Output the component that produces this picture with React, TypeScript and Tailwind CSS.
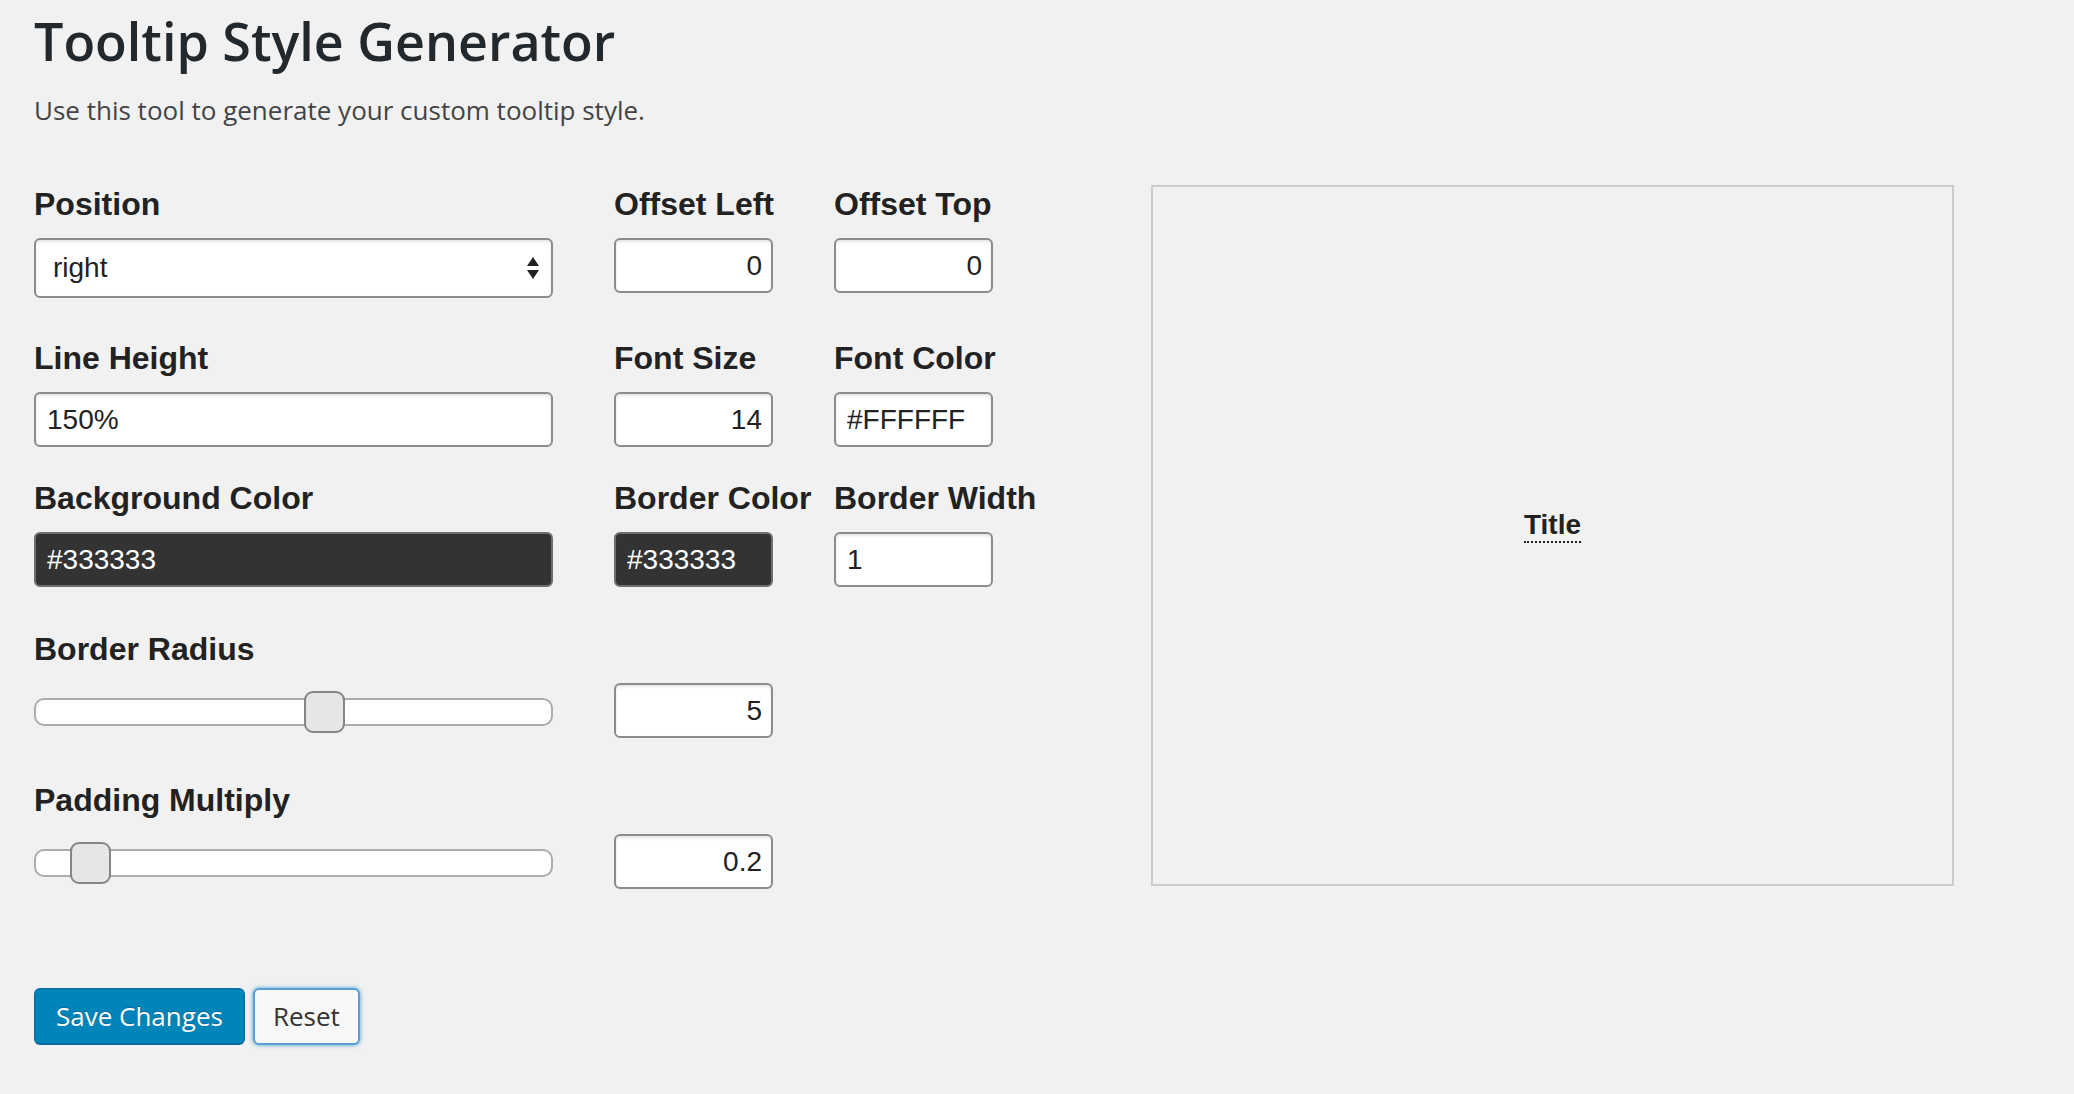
import { useState } from 'react';

const sans = "font-['Liberation_Sans',Arial,sans-serif]";
const open = "font-['Open_Sans',sans-serif]";

const labelCls = `block whitespace-nowrap text-[32px] leading-[32px] font-bold text-[#222] ${sans}`;
const inputCls = `block h-[55px] w-full rounded-[6px] border-2 border-[#8c8c8c] bg-white px-[11px] text-[28px] text-[#222] shadow-[inset_0_2px_3px_rgba(0,0,0,0.1)] outline-none ${sans}`;
const darkCls = `block h-[55px] w-full rounded-[6px] border-2 border-[#6e6e6e] bg-[#333333] px-[11px] text-[28px] text-white outline-none ${sans}`;

const Field = ({ label, children }: { label?: string; children: React.ReactNode }) => (
  <div>
    {label ? <span className={labelCls}>{label}</span> : <span className="block h-[32px]" />}
    <div className="mt-[18px]">{children}</div>
  </div>
);

const Slider = ({ offset }: { offset: number }) => (
  <div className="relative h-[28px] w-full rounded-[10px] border-2 border-[#acacac] bg-white">
    {/* thumb */}
    <div
      className="absolute top-[-9px] h-[42px] w-[41px] rounded-[9px] border-2 border-[#858585] bg-[#e6e6e6]"
      style={{ left: offset }}
    />
  </div>
);

export default function App() {
  const [position, setPosition] = useState('right');

  return (
    <div className={`min-h-screen bg-[#f1f1f1] pl-[34px] pt-[11px] ${open}`}>
      <h1 className="text-[52px] leading-[60px] font-semibold text-[#23282d]">Tooltip Style Generator</h1>
      <p className="mt-[21px] text-[26px] leading-[36px] text-[#444]">
        Use this tool to generate your custom tooltip style.
      </p>

      <div className="mt-[57px] flex items-start">
        {/* Form */}
        <div className="w-[960px] pt-[3px]">
          <div className="grid grid-cols-[519px_159px_159px] items-start gap-x-[61px]">
            <Field label="Position">
              <div className="relative">
                <select
                  value={position}
                  onChange={(e) => setPosition(e.target.value)}
                  className={`${inputCls} h-[60px] appearance-none pl-[17px]`}
                >
                  <option>top</option>
                  <option>right</option>
                  <option>bottom</option>
                  <option>left</option>
                </select>
                <svg className="pointer-events-none absolute right-[13px] top-[18px]" width="14" height="24" viewBox="0 0 14 24">
                  <path d="M7 1 L13 10 L1 10 Z" fill="#222" />
                  <path d="M1 14 L13 14 L7 23 Z" fill="#222" />
                </svg>
              </div>
            </Field>
            <Field label="Offset Left">
              <input className={`${inputCls} text-right pr-[9px]`} defaultValue="0" />
            </Field>
            <Field label="Offset Top">
              <input className={`${inputCls} text-right pr-[9px]`} defaultValue="0" />
            </Field>
          </div>

          <div className="mt-[44px] grid grid-cols-[519px_159px_159px] items-start gap-x-[61px]">
            <Field label="Line Height">
              <input className={inputCls} defaultValue="150%" />
            </Field>
            <Field label="Font Size">
              <input className={`${inputCls} text-right pr-[9px]`} defaultValue="14" />
            </Field>
            <Field label="Font Color">
              <input className={inputCls} defaultValue="#FFFFFF" />
            </Field>
          </div>

          <div className="mt-[35px] grid grid-cols-[519px_159px_159px] items-start gap-x-[61px]">
            <Field label="Background Color">
              <input className={darkCls} defaultValue="#333333" />
            </Field>
            <Field label="Border Color">
              <input className={darkCls} defaultValue="#333333" />
            </Field>
            <Field label="Border Width">
              <input className={inputCls} defaultValue="1" />
            </Field>
          </div>

          <div className="mt-[46px] grid grid-cols-[519px_159px_159px] items-start gap-x-[61px]">
            <Field label="Border Radius">
              <div className="flex h-[55px] items-center pt-[3px]">
                <Slider offset={268} />
              </div>
            </Field>
            <Field>
              <input className={`${inputCls} text-right pr-[9px]`} defaultValue="5" />
            </Field>
          </div>

          <div className="mt-[46px] grid grid-cols-[519px_159px_159px] items-start gap-x-[61px]">
            <Field label="Padding Multiply">
              <div className="flex h-[55px] items-center pt-[3px]">
                <Slider offset={34} />
              </div>
            </Field>
            <Field>
              <input className={`${inputCls} text-right pr-[9px]`} defaultValue="0.2" />
            </Field>
          </div>
        </div>

        {/* Preview */}
        <div className="ml-[157px] flex h-[701px] w-[803px] items-center justify-center border-2 border-[#cccccc]">
          <span className={`mb-[20px] border-b-2 border-dotted border-[#222] text-[28px] leading-[32px] font-bold text-[#222] ${sans}`}>
            Title
          </span>
        </div>
      </div>

      <div className="mt-[99px] flex gap-[8px]">
        <button className="h-[57px] rounded-[6px] border-2 border-[#0073aa] border-b-[#006799] bg-[#0085ba] px-[20px] text-[26px] text-white [text-shadow:0_-1px_1px_#006799]">
          Save Changes
        </button>
        <button className="h-[57px] rounded-[6px] border-2 border-[#5b9dd9] bg-[#f7f7f7] px-[18px] text-[26px] text-[#333] shadow-[0_0_4px_rgba(30,140,190,0.8)]">
          Reset
        </button>
      </div>
    </div>
  );
}
